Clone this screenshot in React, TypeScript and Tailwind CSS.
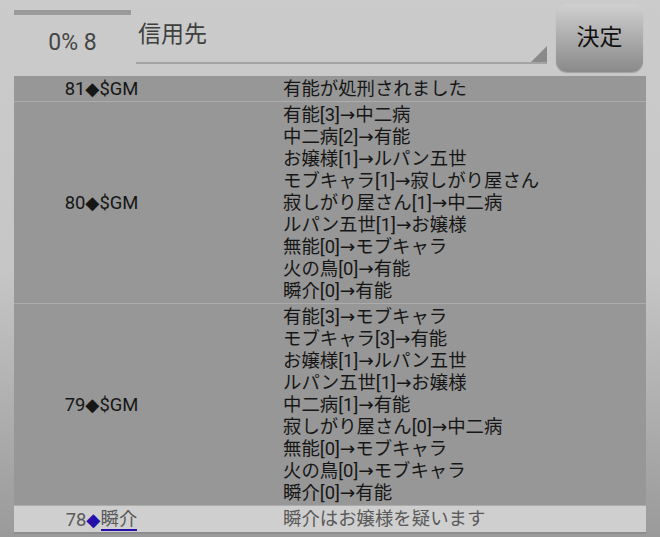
const rows = [
  { no: 81, who: '$GM', lines: ['有能が処刑されました'] },
  {
    no: 80,
    who: '$GM',
    lines: [
      '有能[3]→中二病',
      '中二病[2]→有能',
      'お嬢様[1]→ルパン五世',
      'モブキャラ[1]→寂しがり屋さん',
      '寂しがり屋さん[1]→中二病',
      'ルパン五世[1]→お嬢様',
      '無能[0]→モブキャラ',
      '火の鳥[0]→有能',
      '瞬介[0]→有能',
    ],
  },
  {
    no: 79,
    who: '$GM',
    lines: [
      '有能[3]→モブキャラ',
      'モブキャラ[3]→有能',
      'お嬢様[1]→ルパン五世',
      'ルパン五世[1]→お嬢様',
      '中二病[1]→有能',
      '寂しがり屋さん[0]→中二病',
      '無能[0]→モブキャラ',
      '火の鳥[0]→モブキャラ',
      '瞬介[0]→有能',
    ],
  },
]

export default function App() {
  return (
    <div
      className="w-[660px] h-[537px] overflow-hidden bg-gradient-to-b from-[#cbcbcb] via-[#c6c6c6] to-[#9a9a9a] text-[18.4px] leading-[22px] text-[#161616]"
      style={{ fontFamily: 'Roboto, "DejaVu Sans", "Noto Sans CJK JP", sans-serif' }}
    >
      {/* header */}
      <div className="h-[76px] flex pl-[14px] pr-[17px]">
        <div className="w-[117px] pt-[10px] flex flex-col items-center">
          <div className="h-[5px] w-full bg-[#9a9a9a]" />
          <div className="mt-[14px] text-[23px] leading-[28px] text-[#454545]">0% 8</div>
        </div>
        <div className="ml-[5px] w-[411px] h-[64px] relative border-b-2 border-[#a3a3a3]">
          <div className="pl-[2px] pt-[22px] text-[23px] leading-[26px] text-[#3f3f3f]">信用先</div>
          <div className="absolute right-0 bottom-0 w-0 h-0 border-l-[16px] border-l-transparent border-b-[16px] border-b-[#8a8a8a]" />
        </div>
        <button className="ml-[9px] mt-[4px] w-[87px] h-[68px] rounded-[11px] bg-gradient-to-b from-[#d0d0d0] to-[#8a8a8a] text-[23px] text-[#111] shadow-[0_1px_1px_rgba(0,0,0,0.2)]">
          決定
        </button>
      </div>

      {/* log table */}
      <div className="ml-[14px] w-[632px]">
        {rows.map((r, i) => (
          <div
            key={r.no}
            className={`grid grid-cols-[175px_1fr] bg-[#979797] pt-[2px] pb-[1px] ${i > 0 ? 'border-t border-[#acacac]' : ''}`}
          >
            <div className="flex items-center justify-center">
              {r.no}◆{r.who}
            </div>
            <div className="pl-[94px]">
              {r.lines.map((l) => (
                <div key={l}>{l}</div>
              ))}
            </div>
          </div>
        ))}
        <div className="grid grid-cols-[175px_1fr] bg-[#cfcfcf] pt-[2px] pb-[1px] border-t border-[#acacac] border-b-2 border-b-[#8e8e8e] text-[#5a5a5a]">
          <div className="flex items-center justify-center">
            78<span className="text-[#2410a8]">◆</span>
            <span className="border-b-2 border-[#2410a8] leading-[21px]">瞬介</span>
          </div>
          <div className="pl-[94px]">瞬介はお嬢様を疑います</div>
        </div>
      </div>
    </div>
  )
}
